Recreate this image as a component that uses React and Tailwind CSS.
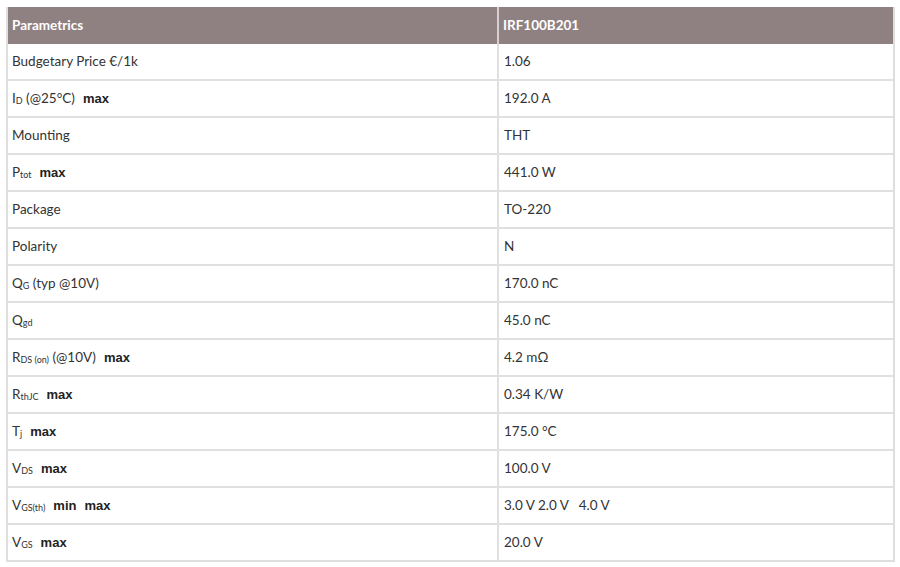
import React from "react";

const Sub = ({ children }) => (
  <sub className="text-[9px] align-[-2px] leading-none">{children}</sub>
);
const Max = ({ children = "max" }) => (
  <span
    className="font-bold text-[#222] text-[13px] ml-[8px]"
    style={{ fontFamily: "'Liberation Sans', Arial, sans-serif" }}
  >
    {children}
  </span>
);

const rows = [
  [<>Budgetary Price €/1k</>, "1.06"],
  [<>I<Sub>D</Sub> (@25°C)<Max /></>, "192.0 A"],
  [<>Mounting</>, "THT"],
  [<>P<Sub>tot</Sub><Max /></>, "441.0 W"],
  [<>Package</>, "TO-220"],
  [<>Polarity</>, "N"],
  [<>Q<Sub>G</Sub> (typ @10V)</>, "170.0 nC"],
  [<>Q<Sub>gd</Sub></>, "45.0 nC"],
  [<>R<Sub>DS (on)</Sub> (@10V)<Max /></>, "4.2 mΩ"],
  [<>R<Sub>thJC</Sub><Max /></>, "0.34 K/W"],
  [<>T<Sub>j</Sub><Max /></>, "175.0 °C"],
  [<>V<Sub>DS</Sub><Max /></>, "100.0 V"],
  [<>V<Sub>GS(th)</Sub><Max>min</Max><Max /></>, "3.0 V 2.0 V \u00a0 4.0 V"],
  [<>V<Sub>GS</Sub><Max /></>, "20.0 V"],
];

export default function App() {
  return (
    <div
      className="w-[900px] h-[567px] bg-white pt-[7px] pl-[6px]"
      style={{ fontFamily: "Lato, 'Open Sans', sans-serif" }}
    >
      <div className="w-[889px] border-x-2 border-b-2 border-[#dedede]">
        <div className="grid grid-cols-[491px_1fr] h-[37px] bg-[#8f8081] text-white font-bold text-[13.5px]">
          <div className="flex items-center pl-[4px] border-r-2 border-[#d8d0d0]">Parametrics</div>
          <div className="flex items-center pl-[4px]">IRF100B201</div>
        </div>
        {rows.map(([a, b], i) => (
          <div
            key={i}
            className={`grid grid-cols-[491px_1fr] text-[13.5px] text-[#333] ${
              i < rows.length - 1 ? "h-[37px] border-b-2 border-[#e0e0e0]" : "h-[35px]"
            }`}
          >
            <div className="flex items-center pl-[4px] border-r-2 border-[#e0e0e0] whitespace-pre">{a}</div>
            <div className="flex items-center pl-[5px] whitespace-pre">{b}</div>
          </div>
        ))}
      </div>
    </div>
  );
}
